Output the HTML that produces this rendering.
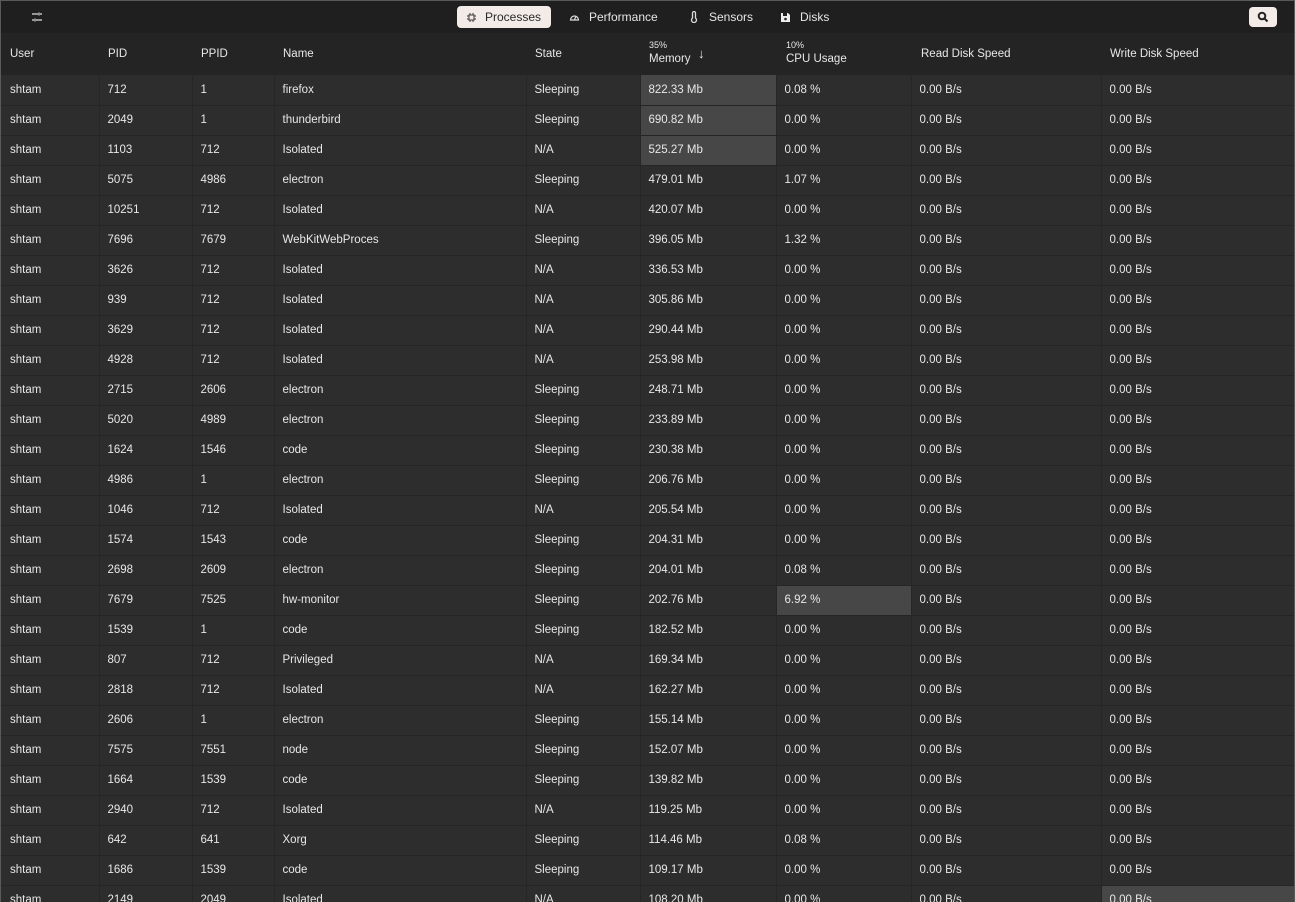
<!DOCTYPE html><html><head><meta charset="utf-8"><style>
*{margin:0;padding:0;box-sizing:border-box}
body{width:1295px;height:902px;overflow:hidden;background:#2d2d2d;font-family:"Liberation Sans",sans-serif;font-size:11.5px;color:#e8e8e8;position:relative}
.win{position:absolute;left:0;top:0;width:1295px;height:902px;border:1px solid #5a5a5a;border-bottom:none;overflow:hidden}
.top{height:32px;background:#1f1f1f;position:relative}
.tab{position:absolute;top:5px;height:22px;line-height:22px;font-size:12px;color:#e6e6e6;padding-left:0}
.tab.act{background:#f2ebe8;color:#2a2a2a;border-radius:4px}
.hdr{height:42px;background:#242424;position:relative}
.hdr span{position:absolute}
table{border-collapse:collapse;table-layout:fixed;width:1293px}
td{height:30px;border-bottom:1px solid #252525;border-left:1px solid #262626;padding-left:8px;white-space:nowrap;overflow:hidden}
td:first-child{border-left:none;padding-left:9px}
.h{background:#474747}
</style></head><body><div class="win">
<div class="top">
<svg style="position:absolute;left:30px;top:10px" width="12" height="12" viewBox="0 0 12 12" fill="none" stroke="#ddd" stroke-width="1.2"><path d="M1 3h6M9 3h2M8 1.5v3M1 9h2M5 9h6M4 7.5v3"/></svg>
<div class="tab act" style="left:456px;width:94px"><svg style="position:absolute;left:9px;top:6px" width="11" height="11" viewBox="0 0 11 11" fill="none" stroke="#555" stroke-width="1.2"><rect x="3" y="3" width="5" height="5"/><path d="M4 1v2M7 1v2M4 8v2M7 8v2M1 4h2M1 7h2M8 4h2M8 7h2"/></svg><span style="position:absolute;left:28px">Processes</span></div>
<div class="tab" style="left:568px"><svg style="position:absolute;left:0;top:6px" width="11" height="11" viewBox="0 0 11 11" fill="none" stroke="#ddd" stroke-width="1.2"><path d="M1.5 8A4 4 0 1 1 9.5 8Z"/><path d="M5.5 7.5L7 4.5"/></svg><span style="position:absolute;left:20px;white-space:nowrap">Performance</span></div>
<div class="tab" style="left:689px"><svg style="position:absolute;left:0;top:5px" width="8" height="12" viewBox="0 0 8 12" fill="none" stroke="#ddd" stroke-width="1.3"><path d="M2.5 7V2a1.5 1.5 0 0 1 3 0v5a2.5 2.5 0 1 1-3 0Z"/></svg><span style="position:absolute;left:19px">Sensors</span></div>
<div class="tab" style="left:779px"><svg style="position:absolute;left:0;top:6px" width="11" height="11" viewBox="0 0 11 11"><path d="M1 1h7l2 2v7H1Z" fill="#eee"/><rect x="3" y="1" width="4" height="3" fill="#1f1f1f"/><circle cx="5.5" cy="7" r="1.3" fill="#1f1f1f"/></svg><span style="position:absolute;left:20px">Disks</span></div>
<div style="position:absolute;left:1248px;top:6px;width:28px;height:20px;background:#f2ebe8;border-radius:4px"><svg style="position:absolute;left:8px;top:4px" width="12" height="12" viewBox="0 0 12 12" fill="none" stroke="#222" stroke-width="2"><circle cx="5" cy="5" r="3.3"/><path d="M7.5 7.5L10.5 10.5"/></svg></div>
</div>
<div class="hdr">
<span style="left:9px;top:15px">User</span><span style="left:107px;top:15px">PID</span><span style="left:200px;top:15px">PPID</span><span style="left:282px;top:15px">Name</span><span style="left:534px;top:15px">State</span>
<span style="left:648px;top:7px;font-size:9px">35%</span><span style="left:648px;top:20px">Memory</span><span style="left:697px;top:13px;font-size:13px;font-weight:bold">&#8595;</span>
<span style="left:785px;top:7px;font-size:9px">10%</span><span style="left:785px;top:20px">CPU Usage</span>
<span style="left:920px;top:15px">Read Disk Speed</span><span style="left:1109px;top:15px">Write Disk Speed</span>
</div>
<table><colgroup><col style="width:98px"><col style="width:93px"><col style="width:82px"><col style="width:252px"><col style="width:114px"><col style="width:136px"><col style="width:135px"><col style="width:190px"><col style="width:193px"></colgroup>
<tr><td>shtam</td><td>712</td><td>1</td><td>firefox</td><td>Sleeping</td><td class="h">822.33 Mb</td><td>0.08 %</td><td>0.00 B/s</td><td>0.00 B/s</td></tr>
<tr><td>shtam</td><td>2049</td><td>1</td><td>thunderbird</td><td>Sleeping</td><td class="h">690.82 Mb</td><td>0.00 %</td><td>0.00 B/s</td><td>0.00 B/s</td></tr>
<tr><td>shtam</td><td>1103</td><td>712</td><td>Isolated</td><td>N/A</td><td class="h">525.27 Mb</td><td>0.00 %</td><td>0.00 B/s</td><td>0.00 B/s</td></tr>
<tr><td>shtam</td><td>5075</td><td>4986</td><td>electron</td><td>Sleeping</td><td>479.01 Mb</td><td>1.07 %</td><td>0.00 B/s</td><td>0.00 B/s</td></tr>
<tr><td>shtam</td><td>10251</td><td>712</td><td>Isolated</td><td>N/A</td><td>420.07 Mb</td><td>0.00 %</td><td>0.00 B/s</td><td>0.00 B/s</td></tr>
<tr><td>shtam</td><td>7696</td><td>7679</td><td>WebKitWebProces</td><td>Sleeping</td><td>396.05 Mb</td><td>1.32 %</td><td>0.00 B/s</td><td>0.00 B/s</td></tr>
<tr><td>shtam</td><td>3626</td><td>712</td><td>Isolated</td><td>N/A</td><td>336.53 Mb</td><td>0.00 %</td><td>0.00 B/s</td><td>0.00 B/s</td></tr>
<tr><td>shtam</td><td>939</td><td>712</td><td>Isolated</td><td>N/A</td><td>305.86 Mb</td><td>0.00 %</td><td>0.00 B/s</td><td>0.00 B/s</td></tr>
<tr><td>shtam</td><td>3629</td><td>712</td><td>Isolated</td><td>N/A</td><td>290.44 Mb</td><td>0.00 %</td><td>0.00 B/s</td><td>0.00 B/s</td></tr>
<tr><td>shtam</td><td>4928</td><td>712</td><td>Isolated</td><td>N/A</td><td>253.98 Mb</td><td>0.00 %</td><td>0.00 B/s</td><td>0.00 B/s</td></tr>
<tr><td>shtam</td><td>2715</td><td>2606</td><td>electron</td><td>Sleeping</td><td>248.71 Mb</td><td>0.00 %</td><td>0.00 B/s</td><td>0.00 B/s</td></tr>
<tr><td>shtam</td><td>5020</td><td>4989</td><td>electron</td><td>Sleeping</td><td>233.89 Mb</td><td>0.00 %</td><td>0.00 B/s</td><td>0.00 B/s</td></tr>
<tr><td>shtam</td><td>1624</td><td>1546</td><td>code</td><td>Sleeping</td><td>230.38 Mb</td><td>0.00 %</td><td>0.00 B/s</td><td>0.00 B/s</td></tr>
<tr><td>shtam</td><td>4986</td><td>1</td><td>electron</td><td>Sleeping</td><td>206.76 Mb</td><td>0.00 %</td><td>0.00 B/s</td><td>0.00 B/s</td></tr>
<tr><td>shtam</td><td>1046</td><td>712</td><td>Isolated</td><td>N/A</td><td>205.54 Mb</td><td>0.00 %</td><td>0.00 B/s</td><td>0.00 B/s</td></tr>
<tr><td>shtam</td><td>1574</td><td>1543</td><td>code</td><td>Sleeping</td><td>204.31 Mb</td><td>0.00 %</td><td>0.00 B/s</td><td>0.00 B/s</td></tr>
<tr><td>shtam</td><td>2698</td><td>2609</td><td>electron</td><td>Sleeping</td><td>204.01 Mb</td><td>0.08 %</td><td>0.00 B/s</td><td>0.00 B/s</td></tr>
<tr><td>shtam</td><td>7679</td><td>7525</td><td>hw-monitor</td><td>Sleeping</td><td>202.76 Mb</td><td class="h">6.92 %</td><td>0.00 B/s</td><td>0.00 B/s</td></tr>
<tr><td>shtam</td><td>1539</td><td>1</td><td>code</td><td>Sleeping</td><td>182.52 Mb</td><td>0.00 %</td><td>0.00 B/s</td><td>0.00 B/s</td></tr>
<tr><td>shtam</td><td>807</td><td>712</td><td>Privileged</td><td>N/A</td><td>169.34 Mb</td><td>0.00 %</td><td>0.00 B/s</td><td>0.00 B/s</td></tr>
<tr><td>shtam</td><td>2818</td><td>712</td><td>Isolated</td><td>N/A</td><td>162.27 Mb</td><td>0.00 %</td><td>0.00 B/s</td><td>0.00 B/s</td></tr>
<tr><td>shtam</td><td>2606</td><td>1</td><td>electron</td><td>Sleeping</td><td>155.14 Mb</td><td>0.00 %</td><td>0.00 B/s</td><td>0.00 B/s</td></tr>
<tr><td>shtam</td><td>7575</td><td>7551</td><td>node</td><td>Sleeping</td><td>152.07 Mb</td><td>0.00 %</td><td>0.00 B/s</td><td>0.00 B/s</td></tr>
<tr><td>shtam</td><td>1664</td><td>1539</td><td>code</td><td>Sleeping</td><td>139.82 Mb</td><td>0.00 %</td><td>0.00 B/s</td><td>0.00 B/s</td></tr>
<tr><td>shtam</td><td>2940</td><td>712</td><td>Isolated</td><td>N/A</td><td>119.25 Mb</td><td>0.00 %</td><td>0.00 B/s</td><td>0.00 B/s</td></tr>
<tr><td>shtam</td><td>642</td><td>641</td><td>Xorg</td><td>Sleeping</td><td>114.46 Mb</td><td>0.08 %</td><td>0.00 B/s</td><td>0.00 B/s</td></tr>
<tr><td>shtam</td><td>1686</td><td>1539</td><td>code</td><td>Sleeping</td><td>109.17 Mb</td><td>0.00 %</td><td>0.00 B/s</td><td>0.00 B/s</td></tr>
<tr><td>shtam</td><td>2149</td><td>2049</td><td>Isolated</td><td>N/A</td><td>108.20 Mb</td><td>0.00 %</td><td>0.00 B/s</td><td class="h">0.00 B/s</td></tr>
</table>
</div></body></html>
